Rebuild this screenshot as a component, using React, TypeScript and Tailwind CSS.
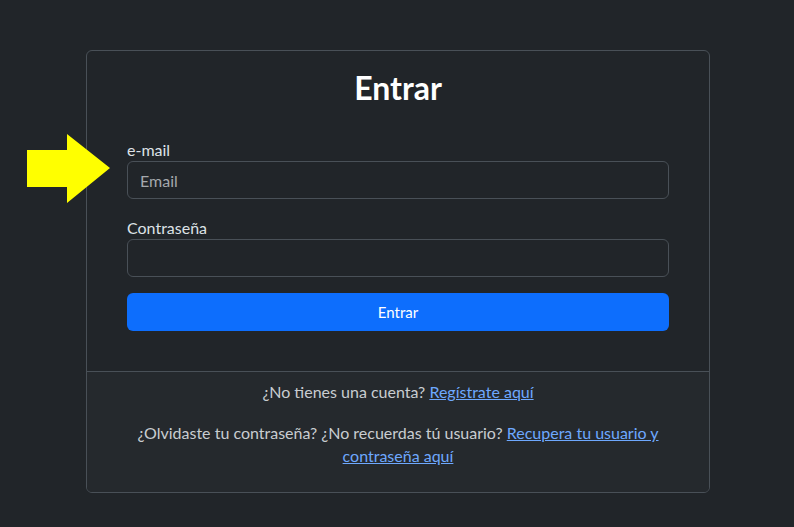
import { ReactNode } from "react";

interface FieldProps {
  label: string;
  placeholder?: string;
  type?: string;
}

function Field({ label, placeholder, type = "text" }: FieldProps) {
  return (
    <div className="flex flex-col">
      <label className="h-[23px] leading-6 text-[16px] text-[#dee2e6]">{label}</label>
      <input
        type={type}
        placeholder={placeholder}
        className="h-[38px] w-full rounded-[6px] border border-[#495057] bg-[#212529] px-3 text-[16px] text-[#dee2e6] outline-none placeholder:text-[#a5a9ad]"
      />
    </div>
  );
}

function Link({ children }: { children: ReactNode }) {
  return (
    <a href="#" className="text-[#6ea8fe] underline">
      {children}
    </a>
  );
}

export default function App() {
  return (
    <div
      className="relative min-h-[527px] w-full bg-[#212529] pt-[50px] text-[#dee2e6]"
      style={{ fontFamily: "Lato, 'Open Sans', sans-serif" }}
    >
      <svg
        className="absolute left-0 top-0"
        width="120"
        height="210"
        viewBox="0 0 120 210"
      >
        <polygon
          points="27,150 67,150 67,134 110,168 67,203 67,187 27,187"
          fill="#ffff00"
        />
      </svg>

      <div className="ml-[86px] w-[624px] overflow-hidden rounded-[6px] border border-[#495057]">
        <div className="flex flex-col px-10 pt-[18px] pb-10">
          <h2 className="mb-[31px] text-center text-[32px] font-bold leading-[38px] text-white">
            Entrar
          </h2>
          <Field label="e-mail" placeholder="Email" type="email" />
          <div className="mt-[17px]">
            <Field label="Contraseña" type="password" />
          </div>
          <button className="mt-4 h-[38px] w-full rounded-[6px] bg-[#0d6efd] text-[15px] text-white">
            Entrar
          </button>
        </div>
        <div className="border-t border-[#495057] bg-[#25292d] px-4 pt-2 pb-[25px] text-center text-[16px] leading-[23px] text-[#c9cdd1]">
          <p className="mb-[18px]">
            ¿No tienes una cuenta? <Link>Regístrate aquí</Link>
          </p>
          <p className="mx-auto max-w-[540px]">
            ¿Olvidaste tu contraseña? ¿No recuerdas tú usuario?{" "}
            <Link>Recupera tu usuario y contraseña aquí</Link>
          </p>
        </div>
      </div>
    </div>
  );
}
